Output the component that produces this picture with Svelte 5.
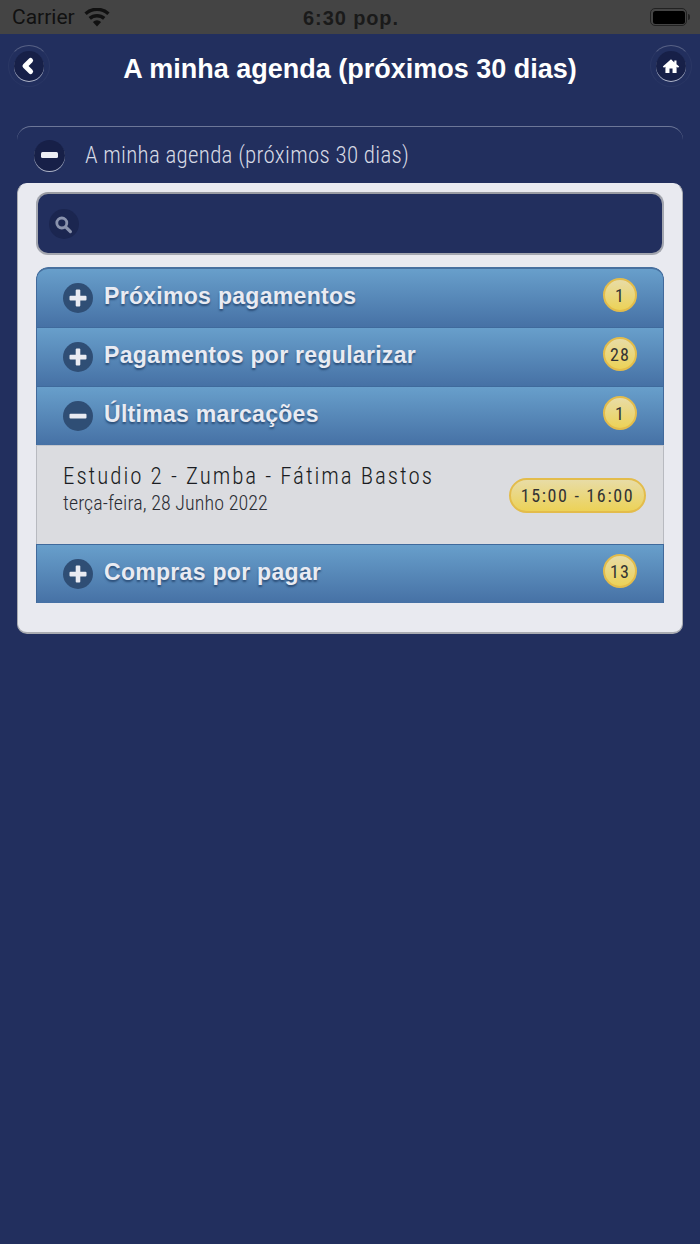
<script lang="ts">
  interface Section {
    title: string;
    count: number;
    open?: boolean;
  }

  const sections: Section[] = [
    { title: 'Próximos pagamentos', count: 1 },
    { title: 'Pagamentos por regularizar', count: 28 },
    { title: 'Últimas marcações', count: 1, open: true },
    { title: 'Compras por pagar', count: 13 },
  ];
</script>

<div class="page">
  <div class="statusbar">
    <div class="carrier">
      <span>Carrier</span>
      <svg class="wifi" viewBox="0 0 26 19" width="26" height="19">
        <path d="M13 18.5 8.9 13.9a6 6 0 0 1 8.2 0z" fill="#111" />
        <path d="M6.9 11.7 4.6 9.1a12.6 12.6 0 0 1 16.8 0l-2.3 2.6a9.2 9.2 0 0 0-12.2 0z" fill="#111" />
        <path d="M2.7 7 .4 4.4a19 19 0 0 1 25.2 0L23.3 7a15.6 15.6 0 0 0-20.6 0z" fill="#111" />
      </svg>
    </div>
    <div class="clock">6:30 pop.</div>
    <div class="battery">
      <div class="battery-body"><div class="battery-fill"></div></div>
      <div class="battery-tip"></div>
    </div>
  </div>

  <header class="navbar">
    <button class="round-btn" aria-label="Voltar">
      <span class="round-inner">
        <svg viewBox="0 0 20 20" width="20" height="20">
          <path d="M11.6 4.4 6 10l5.6 5.6" fill="none" stroke="#fff" stroke-width="5" stroke-linecap="round" stroke-linejoin="round" />
        </svg>
      </span>
    </button>
    <h1>A minha agenda (próximos 30 dias)</h1>
    <button class="round-btn" aria-label="Início">
      <span class="round-inner">
        <svg viewBox="0 0 20 20" width="18" height="18">
          <path d="M10 2.6.9 10.6l1.3 1.3 1.6-1.2v7h4.5v-4.9h3.4v4.9h4.5v-7l1.6 1.2 1.3-1.3-3-2.6V4h-2.4v2.1z" fill="#fff" />
        </svg>
      </span>
    </button>
  </header>

  <section class="agenda">
    <div class="agenda-head">
      <span class="head-icon">
        <span class="dash"></span>
      </span>
      <span class="head-title">A minha agenda (próximos 30 dias)</span>
    </div>

    <div class="panel">
      <div class="search">
        <span class="search-icon">
          <svg viewBox="0 0 20 20" width="20" height="20">
            <circle cx="7.8" cy="9" r="5" fill="none" stroke="#8a93ad" stroke-width="2.8" />
            <path d="m11.6 12.8 4.8 4.8" stroke="#8a93ad" stroke-width="3.2" stroke-linecap="round" />
          </svg>
        </span>
      </div>

      <div class="list">
        {#each sections as section}
          <div class="row" class:row-open={section.open}>
            <span class="row-icon">
              <svg viewBox="0 0 30 30" width="30" height="30">
                <rect x="6.5" y="12.8" width="17" height="4.6" rx="1" fill="#e9ebf2" />
                {#if !section.open}
                  <rect x="12.7" y="6.5" width="4.6" height="17" rx="1" fill="#e9ebf2" />
                {/if}
              </svg>
            </span>
            <span class="row-title">{section.title}</span>
            <span class="count">{section.count}</span>
          </div>
          {#if section.open}
            <div class="entry">
              <div class="entry-text">
                <div class="entry-name">Estudio 2 - Zumba - Fátima Bastos</div>
                <div class="entry-date">terça-feira, 28 Junho 2022</div>
              </div>
              <span class="time">15:00 - 16:00</span>
            </div>
          {/if}
        {/each}
      </div>
    </div>
  </section>
</div>

<style>
  :global(body) {
    margin: 0;
    background: #222f5e;
  }

  .page {
    width: 700px;
    height: 1244px;
    background: #222f5e;
    overflow: hidden;
  }

  .statusbar {
    height: 34px;
    background: #444444;
    display: flex;
    align-items: center;
    justify-content: space-between;
    padding: 0 10px 0 12px;
    color: #111;
    font-family: Roboto, sans-serif;
  }

  .carrier {
    display: flex;
    align-items: center;
    gap: 9px;
    font-size: 21px;
    width: 120px;
  }

  .clock {
    font-family: 'Liberation Sans', sans-serif;
    font-size: 20px;
    font-weight: 700;
    letter-spacing: 0.9px;
    color: #1a1a1a;
    margin-top: 2px;
  }

  .battery {
    width: 120px;
    display: flex;
    align-items: center;
    justify-content: flex-end;
  }

  .battery-body {
    width: 37px;
    height: 18px;
    border: 1.5px solid #222;
    border-radius: 5px;
    padding: 1.5px;
    box-sizing: border-box;
  }

  .battery-fill {
    height: 100%;
    background: #000;
    border-radius: 2.5px;
  }

  .battery-tip {
    width: 2px;
    height: 6px;
    background: #222;
    border-radius: 0 2px 2px 0;
    margin-left: 1px;
  }

  .navbar {
    height: 68px;
    display: flex;
    align-items: center;
    justify-content: space-between;
    padding: 0 8px 4px;
    box-sizing: border-box;
  }

  .navbar h1 {
    margin: 5px 0 0;
    color: #fff;
    font-family: 'Liberation Sans', sans-serif;
    font-size: 27px;
    font-weight: 700;
    line-height: 34px;
  }

  .round-btn {
    width: 42px;
    height: 42px;
    padding: 0;
    border-radius: 50%;
    border: 1px solid transparent;
    border-top-color: rgba(255, 255, 255, 0.24);
    border-left-color: rgba(255, 255, 255, 0.04);
    border-right-color: rgba(255, 255, 255, 0.04);
    border-bottom-color: rgba(255, 255, 255, 0.03);
    background: transparent;
    display: flex;
    align-items: center;
    justify-content: center;
  }

  .round-inner {
    width: 30px;
    height: 30px;
    border-radius: 50%;
    background: #172048;
    box-shadow: 0 1px 0 #aeb4c8;
    display: flex;
    align-items: center;
    justify-content: center;
  }

  .agenda {
    padding: 24px 17px 0;
  }

  .agenda-head {
    height: 57px;
    box-sizing: border-box;
    border-top: 1.5px solid #6d7798;
    border-radius: 14px 14px 0 0;
    display: flex;
    align-items: center;
    padding: 0 0 0 17px;
    gap: 20px;
  }

  .head-icon {
    width: 31px;
    height: 31px;
    border-radius: 50%;
    background: #172048;
    box-shadow: 0 1px 0 #aeb4c8;
    display: flex;
    align-items: center;
    justify-content: center;
  }

  .dash {
    width: 17px;
    height: 6px;
    border-radius: 1.5px;
    background: #eceef4;
  }

  .head-title {
    color: #d6d9e4;
    font-family: Roboto, sans-serif;
    font-stretch: condensed;
    font-weight: 300;
    font-size: 23px;
    line-height: 28px;
    letter-spacing: 0.26px;
    margin-top: 2px;
  }

  .panel {
    background: #e9eaf0;
    border: 1px solid #a9abb1;
    border-top-color: #e9eaf0;
    border-bottom-width: 2px;
    border-radius: 10px;
    padding: 8px 18px 29px;
  }

  .search {
    height: 63px;
    box-sizing: border-box;
    background: #222f5e;
    border: 2px solid #a3a6af;
    border-top-color: #9a9ca3;
    border-radius: 12px;
    display: flex;
    align-items: center;
    padding-left: 11px;
    margin-bottom: 12px;
  }

  .search-icon {
    width: 30px;
    height: 30px;
    border-radius: 50%;
    background: #1b2650;
    display: flex;
    align-items: center;
    justify-content: center;
  }

  .list {
    border-radius: 12px 12px 0 0;
    overflow: hidden;
  }

  .row {
    height: 59px;
    box-sizing: border-box;
    background: linear-gradient(#689fcb, #4671a5);
    border-top: 1px solid #3f6a9c;
    border-left: 1px solid #41699b;
    border-right: 1px solid #41699b;
    display: flex;
    align-items: center;
    padding: 0 26px;
  }

  .row:first-child {
    height: 60px;
    border-top: 2px solid #47709f;
    border-radius: 12px 12px 0 0;
  }

  .row-icon {
    width: 30px;
    height: 30px;
    border-radius: 50%;
    background: #2f4e75;
    display: flex;
    align-items: center;
    justify-content: center;
    flex: none;
  }

  .row-title {
    margin-left: 11px;
    flex: 1;
    color: #e9ebf2;
    font-family: 'Liberation Sans', sans-serif;
    font-size: 23px;
    font-weight: 700;
    letter-spacing: 0.3px;
    text-shadow: 0 2px 2px rgba(30, 60, 100, 0.75);
    margin-top: -3px;
  }

  .count {
    width: 34px;
    height: 34px;
    box-sizing: border-box;
    border-radius: 50%;
    border: 2px solid #e3bc4b;
    background: linear-gradient(#e8dca6, #ecd257);
    color: #333;
    font-family: Roboto, sans-serif;
    font-stretch: condensed;
    font-weight: 400;
    font-size: 18px;
    letter-spacing: 1px;
    display: flex;
    align-items: center;
    justify-content: center;
    margin-top: -6px;
  }

  .entry {
    height: 99px;
    box-sizing: border-box;
    background: #dbdce0;
    border-top: 1px solid #c3c6cc;
    border-left: 1px solid #b8bac0;
    border-right: 1px solid #b8bac0;
    display: flex;
    align-items: center;
    justify-content: space-between;
    padding: 0 17px 0 26px;
  }

  .entry-text {
    margin-top: -12px;
  }

  .entry-name {
    color: #1a1c22;
    font-family: Roboto, sans-serif;
    font-stretch: condensed;
    font-weight: 300;
    font-size: 23px;
    line-height: 28px;
    letter-spacing: 1.95px;
  }

  .entry-date {
    color: #2a2c33;
    font-family: Roboto, sans-serif;
    font-stretch: condensed;
    font-weight: 300;
    font-size: 20px;
    line-height: 24px;
    letter-spacing: 0.08px;
  }

  .time {
    width: 137px;
    height: 35px;
    box-sizing: border-box;
    border-radius: 18px;
    border: 2px solid #e3bc4b;
    background: linear-gradient(#e8dca6, #ecd257);
    color: #333;
    font-family: Roboto, sans-serif;
    font-stretch: condensed;
    font-weight: 400;
    font-size: 18px;
    letter-spacing: 1.65px;
    display: flex;
    align-items: center;
    justify-content: center;
    white-space: nowrap;
  }
</style>
